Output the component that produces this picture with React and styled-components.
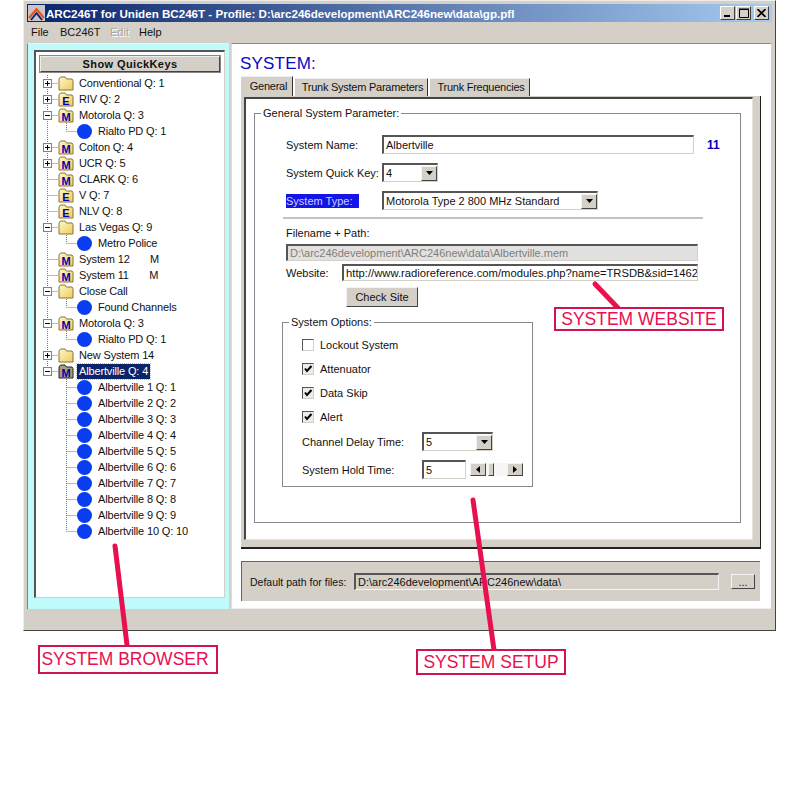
import React from 'react'
import styled, { createGlobalStyle } from 'styled-components'

const face = '#d4d0c8'
const red = '#e8104e'

const GlobalStyle = createGlobalStyle`
  html, body { margin: 0; padding: 0; background: #fff; }
  body { font-family: "Liberation Sans", Arial, sans-serif; font-size: 11px; color: #111; }
  * { box-sizing: border-box; }
`

const TREE = [
  { label: 'Conventional Q: 1', icon: '', box: 'plus' },
  { label: 'RIV Q: 2', icon: 'E', box: 'plus' },
  { label: 'Motorola Q: 3', icon: 'M', box: 'minus' },
  { label: 'Rialto PD Q: 1', child: true, last: true },
  { label: 'Colton Q: 4', icon: 'M', box: 'plus' },
  { label: 'UCR Q: 5', icon: 'M', box: 'plus' },
  { label: 'CLARK Q: 6', icon: 'M' },
  { label: 'V Q: 7', icon: 'E' },
  { label: 'NLV Q: 8', icon: 'E' },
  { label: 'Las Vegas Q: 9', icon: '', box: 'minus' },
  { label: 'Metro Police', child: true, last: true },
  { label: 'System 12       M', icon: 'M' },
  { label: 'System 11       M', icon: 'M' },
  { label: 'Close Call', icon: '', box: 'minus' },
  { label: 'Found Channels', child: true, last: true },
  { label: 'Motorola Q: 3', icon: 'M', box: 'minus' },
  { label: 'Rialto PD Q: 1', child: true, last: true },
  { label: 'New System 14', icon: '', box: 'plus' },
  { label: 'Albertville Q: 4', icon: 'M', box: 'minus', selected: true, end: true },
  ...Array.from({ length: 10 }, (_, i) => ({
    label: `Albertville ${i + 1} Q: ${i + 1}`,
    child: true,
    end: true,
    last: i === 9,
  })),
]

function Logo() {
  return (
    <svg width="17" height="16" viewBox="0 0 17 16">
      <rect width="17" height="16" fill="#c9c6c4" />
      <path d="M1 13 L8.5 4 L16 13" fill="none" stroke="#e8501c" strokeWidth="2" />
      <path d="M3 15 L8.5 8 L14 15" fill="none" stroke="#16246a" strokeWidth="2" />
    </svg>
  )
}

function FolderIcon({ letter, selected }) {
  return (
    <svg width="16" height="15" viewBox="0 0 16 15">
      <defs>
        <linearGradient id="folderFill" x1="0" y1="0" x2="1" y2="1">
          <stop offset="0" stopColor="#fff8c8" />
          <stop offset="1" stopColor="#eecb62" />
        </linearGradient>
      </defs>
      <path
        d="M1 3 L2.5 1 H7 L8.5 3 H14 L15 4.5 V14 H1 Z"
        fill={selected ? '#a8a270' : 'url(#folderFill)'}
        stroke={selected ? '#222' : '#8a7430'}
      />
      {letter && (
        <text
          x="8"
          y="12.5"
          textAnchor="middle"
          fontFamily="Liberation Sans"
          fontWeight="bold"
          fontSize="11"
          fill="#0000b0"
        >
          {letter}
        </text>
      )}
    </svg>
  )
}

// dotted connectors and the +/- box of a tree row
function TreeLines({ row }) {
  const dots = { stroke: '#777', strokeDasharray: '1 1', fill: 'none' }
  const width = row.child ? 39 : 20
  return (
    <svg width={width} height="16" viewBox={`0 0 ${width} 16`}>
      {!row.end && <path d="M9.5 0 V16" {...dots} />}
      {row.end && !row.child && <path d="M9.5 0 V8" {...dots} />}
      {!row.child && <path d="M9.5 8.5 H20" {...dots} />}
      {row.child && <path d={row.last ? 'M28.5 0 V8' : 'M28.5 0 V16'} {...dots} />}
      {row.child && <path d="M28.5 8.5 H39" {...dots} />}
      {row.box && (
        <g>
          <rect x="5.5" y="4.5" width="8" height="8" fill="#fff" stroke="#808080" />
          <path d="M7 8.5 H12" stroke="#000" />
          {row.box === 'plus' && <path d="M9.5 6 V11" stroke="#000" />}
        </g>
      )}
    </svg>
  )
}

function TreeItem({ row }) {
  return (
    <TreeRow>
      <TreeLines row={row} />
      {row.child ? <Dot /> : <FolderIcon letter={row.icon} selected={row.selected} />}
      <TreeLabel $selected={row.selected} $child={row.child}>
        {row.label}
      </TreeLabel>
    </TreeRow>
  )
}

function Combo({ value, width }) {
  return (
    <ComboBox $width={width}>
      <ComboValue>{value}</ComboValue>
      <ComboButton>
        <svg width="7" height="4" viewBox="0 0 7 4">
          <path d="M0 0 H7 L3.5 4 Z" fill="#000" />
        </svg>
      </ComboButton>
    </ComboBox>
  )
}

function Check({ label, checked }) {
  return (
    <CheckRow>
      <CheckBox $checked={checked}>
        {checked && (
          <svg width="10" height="10" viewBox="0 0 10 10">
            <path d="M2 4.5 L4 7 L8.5 2" fill="none" stroke="#000" strokeWidth="2" />
          </svg>
        )}
      </CheckBox>
      {label}
    </CheckRow>
  )
}

export default function App() {
  return (
    <Page>
      <GlobalStyle />
      <Window>
        <TitleBar>
          <Logo />
          <TitleText>ARC246T for Uniden BC246T - Profile: D:\arc246development\ARC246new\data\gp.pfl</TitleText>
          <Caption>
            <CaptionButton>
              <svg width="8" height="8" viewBox="0 0 8 8"><path d="M0 6 H6 V8 H0 Z" fill="#000" /></svg>
            </CaptionButton>
            <CaptionButton>
              <svg width="10" height="10" viewBox="0 0 10 10"><path d="M0.5 1.5 H9.5 V9.5 H0.5 Z M0 1 H10" fill="none" stroke="#000" /></svg>
            </CaptionButton>
            <CaptionButton $close>
              <svg width="9" height="8" viewBox="0 0 9 8"><path d="M0.5 0 L8.5 8 M8.5 0 L0.5 8" stroke="#000" strokeWidth="1.6" /></svg>
            </CaptionButton>
          </Caption>
        </TitleBar>
        <MenuBar>
          <MenuItem $width={29}>File</MenuItem>
          <MenuItem $width={50}>BC246T</MenuItem>
          <MenuItem $width={29} $disabled>Edit</MenuItem>
          <MenuItem $width={30}>Help</MenuItem>
        </MenuBar>
        <Main>
          <BrowserPane>
            <BrowserInner>
              <QuickKeys>Show QuickKeys</QuickKeys>
              <Tree>
                {TREE.map((row, i) => (
                  <TreeItem key={i} row={row} />
                ))}
              </Tree>
            </BrowserInner>
          </BrowserPane>
          <SetupPane>
            <Heading>SYSTEM:</Heading>
            <Tabs>
              <Tab $width={52} $active>General</Tab>
              <Tab $width={133}>Trunk System Parameters</Tab>
              <Tab $width={100}>Trunk Frequencies</Tab>
            </Tabs>
            <TabPage>
              <TabInner>
                <GroupBox>
                  <Legend $offset={-25}>General System Parameter:</Legend>
                  <FormRow>
                    <FieldLabel>System Name:</FieldLabel>
                    <TextInput $width={312} $height={19}>Albertville</TextInput>
                    <Count>11</Count>
                  </FormRow>
                  <FormRow>
                    <FieldLabel>System Quick Key:</FieldLabel>
                    <Combo value="4" width={56} />
                  </FormRow>
                  <FormRow>
                    <FieldLabel><Highlight>System Type:</Highlight></FieldLabel>
                    <Combo value="Motorola Type 2 800 MHz Standard" width={216} />
                  </FormRow>
                  <Separator />
                  <PlainLabel>Filename + Path:</PlainLabel>
                  <TextInput $width={412} $height={17} $disabled>D:\arc246development\ARC246new\data\Albertville.mem</TextInput>
                  <WebsiteRow>
                    <WebsiteLabel>Website:</WebsiteLabel>
                    <WebsiteInput $width={356} $height={17}>http://www.radioreference.com/modules.php?name=TRSDB&amp;sid=1462</WebsiteInput>
                  </WebsiteRow>
                  <CheckSite>Check Site</CheckSite>
                  <OptionsBox>
                    <Legend $offset={-13}>System Options:</Legend>
                    <Checks>
                      <Check label="Lockout System" />
                      <Check label="Attenuator" checked />
                      <Check label="Data Skip" checked />
                      <Check label="Alert" checked />
                    </Checks>
                    <OptionRow>
                      <OptionLabel>Channel Delay Time:</OptionLabel>
                      <Combo value="5" width={71} />
                    </OptionRow>
                    <OptionRow>
                      <OptionLabel>System Hold Time:</OptionLabel>
                      <TextInput $width={44} $height={19}>5</TextInput>
                      <ScrollBar>
                        <ScrollButton>
                          <svg width="4" height="7" viewBox="0 0 4 7"><path d="M4 0 V7 L0 3.5 Z" fill="#000" /></svg>
                        </ScrollButton>
                        <ScrollThumb />
                        <ScrollButton>
                          <svg width="4" height="7" viewBox="0 0 4 7"><path d="M0 0 V7 L4 3.5 Z" fill="#000" /></svg>
                        </ScrollButton>
                      </ScrollBar>
                    </OptionRow>
                  </OptionsBox>
                </GroupBox>
              </TabInner>
            </TabPage>
            <PathPanel>
              <PathLabel>Default path for files:</PathLabel>
              <PathField>D:\arc246development\ARC246new\data\</PathField>
              <BrowseButton>...</BrowseButton>
            </PathPanel>
          </SetupPane>
        </Main>
        <StatusBar />
      </Window>

      <Arrows width="800" height="800" viewBox="0 0 800 800">
        <path d="M595 284 L618 308" stroke={red} strokeWidth="5" strokeLinecap="round" />
        <path d="M115 546 L127 645" stroke={red} strokeWidth="5" strokeLinecap="round" />
        <path d="M473 500 L494 650" stroke={red} strokeWidth="5" strokeLinecap="round" />
      </Arrows>
      <Callout $x={554} $y={307} $w={170} $h={24}>SYSTEM WEBSITE</Callout>
      <Callout $x={38} $y={645} $w={180} $h={29} $inset={6}>SYSTEM BROWSER</Callout>
      <Callout $x={416} $y={649} $w={150} $h={26}>SYSTEM SETUP</Callout>
    </Page>
  )
}

const Page = styled.div`
  position: relative;
  width: 800px;
  height: 800px;
  background: #fff;
  overflow: hidden;
`

const Window = styled.div`
  margin-left: 23px;
  width: 753px;
  height: 631px;
  padding: 3px;
  display: flex;
  flex-direction: column;
  background: ${face};
  border: 1px solid #efedea;
  border-right-color: #444;
  border-bottom-color: #444;
`

const TitleBar = styled.div`
  height: 18px;
  flex: none;
  display: flex;
  align-items: center;
  padding: 0 3px 0 1px;
  background: linear-gradient(90deg, #0a246a, #a6caf0);
`

const TitleText = styled.div`
  margin-left: 1px;
  flex: 1;
  color: #fff;
  font-weight: bold;
  font-size: 11.6px;
  white-space: nowrap;
`

const Caption = styled.div`
  display: flex;
`

const CaptionButton = styled.div`
  width: 15px;
  height: 14px;
  margin-left: ${p => (p.$close ? '3px' : '1px')};
  display: flex;
  align-items: center;
  justify-content: center;
  background: ${face};
  border: 1px solid #fff;
  border-right-color: #404040;
  border-bottom-color: #404040;
`

const MenuBar = styled.div`
  height: 21px;
  flex: none;
  display: flex;
  align-items: center;
  padding-left: 4px;
  padding-bottom: 1px;
`

const MenuItem = styled.div`
  width: ${p => p.$width}px;
  color: ${p => (p.$disabled ? '#a8a6a0' : '#111')};
  text-shadow: ${p => (p.$disabled ? '1px 1px 0 #fff' : 'none')};
`

const Main = styled.div`
  height: 566px;
  flex: none;
  display: flex;
`

const BrowserPane = styled.div`
  width: 202px;
  flex: none;
  padding: 6px 4px 11px 6px;
  background: #c0fbfb;
  border-left: 1px solid #808080;
  border-top: 1px solid #f0f0f0;
`

const BrowserInner = styled.div`
  height: 100%;
  padding: 4px 0 0 4px;
  background: #fff;
  border: 1px solid #d4d0c8;
  border-top: 2px solid #555;
  border-left: 2px solid #555;
`

const QuickKeys = styled.div`
  width: 180px;
  height: 16px;
  display: flex;
  align-items: center;
  justify-content: center;
  background: ${face};
  font-weight: bold;
  letter-spacing: 0.4px;
  border: 1px solid #eee;
  border-right-color: #444;
  border-bottom-color: #444;
  box-shadow: 0 0 0 1px #888;
`

const Tree = styled.div`
  margin-top: 3px;
  margin-left: -2px;
`

const TreeRow = styled.div`
  height: 16px;
  display: flex;
  align-items: center;
  white-space: pre;
`

const Dot = styled.span`
  width: 15px;
  height: 15px;
  border-radius: 50%;
  background: #0a3cf0;
  flex: none;
`

const TreeLabel = styled.span`
  margin-left: ${p => (p.$child ? '4px' : '3px')};
  padding: 0 2px;
  height: 15px;
  line-height: 15px;
  letter-spacing: -0.15px;
  color: ${p => (p.$selected ? '#fff' : '#111')};
  background: ${p => (p.$selected ? '#0a246a' : 'transparent')};
  outline: ${p => (p.$selected ? '1px dotted #c8c080' : 'none')};
`

const SetupPane = styled.div`
  width: 540px;
  margin-left: 2px;
  flex: none;
  padding-left: 9px;
  background: #fff;
  border-left: 1px solid #ddd;
  border-top: 1px solid #888;
  border-bottom: 1px solid #eee;
`

const Heading = styled.div`
  height: 32px;
  margin-left: -1px;
  padding-top: 10px;
  font-size: 17px;
  line-height: 20px;
  letter-spacing: 0.2px;
  color: #0a0ac0;
`

const Tabs = styled.div`
  display: flex;
  align-items: flex-end;
  height: 20px;
`

const Tab = styled.div`
  width: ${p => p.$width}px;
  height: ${p => (p.$active ? '20px' : '18px')};
  margin-right: 2px;
  padding-bottom: 2px;
  padding-left: ${p => (p.$active ? '4px' : '3px')};
  display: flex;
  align-items: center;
  justify-content: center;
  white-space: nowrap;
  letter-spacing: -0.25px;
  background: ${face};
  border-right: 1px solid #333;
  border-top: 1px solid #eee;
`

const TabPage = styled.div`
  width: 520px;
  height: 453px;
  padding: 1px 7px 7px 3px;
  background: ${face};
  border-right: 1px solid #222;
  border-bottom: 2px solid #222;
`

const TabInner = styled.div`
  height: 100%;
  padding: 7px 11px 0 8px;
  background: #fff;
  border: 1px solid #e4e2de;
  border-top: 2px solid #444;
  border-left: 2px solid #444;
`

const GroupBox = styled.fieldset`
  margin: 0;
  height: 417px;
  padding: 15px 0 0 31px;
  border: 1px solid #888;
  min-width: 0;
`

const Legend = styled.legend`
  margin-left: ${p => p.$offset}px;
  padding: 0 2px;
  line-height: 14px;
`

const FormRow = styled.div`
  height: 19px;
  margin-bottom: 9px;
  display: flex;
  align-items: center;
`

const FieldLabel = styled.div`
  width: 96px;
  flex: none;
`

const Highlight = styled.span`
  display: inline-block;
  width: 73px;
  height: 14px;
  line-height: 14px;
  color: #c8d0ff;
  background: #1414e8;
`

const Count = styled.div`
  margin-left: 13px;
  color: #0000b8;
  font-weight: bold;
  font-size: 12px;
`

const TextInput = styled.div`
  width: ${p => p.$width}px;
  height: ${p => p.$height}px;
  flex: none;
  padding-left: 2px;
  display: flex;
  align-items: center;
  white-space: nowrap;
  overflow: hidden;
  color: ${p => (p.$disabled ? '#807e7a' : '#111')};
  background: ${p => (p.$disabled ? '#e3e1df' : '#fff')};
  border: 1px solid #d4d0c8;
  border-top: 2px solid #555;
  border-left: 2px solid #555;
`

const WebsiteInput = styled(TextInput)`
  font-size: 11.25px;
`

const ComboBox = styled.div`
  width: ${p => p.$width}px;
  height: 19px;
  flex: none;
  display: flex;
  align-items: center;
  background: #fff;
  border: 1px solid #d4d0c8;
  border-top: 2px solid #555;
  border-left: 2px solid #555;
`

const ComboValue = styled.div`
  flex: 1;
  padding-left: 2px;
  white-space: nowrap;
`

const ComboButton = styled.div`
  width: 16px;
  height: 15px;
  flex: none;
  display: flex;
  align-items: center;
  justify-content: center;
  background: ${face};
  border: 1px solid #f4f4f4;
  border-right-color: #444;
  border-bottom-color: #444;
`

const Separator = styled.div`
  width: 420px;
  height: 2px;
  margin-top: -2px;
  margin-left: -3px;
  background: #c4c2be;
`

const PlainLabel = styled.div`
  height: 14px;
  margin-top: 7px;
  margin-bottom: 4px;
  line-height: 14px;
`

const WebsiteRow = styled.div`
  margin-top: 3px;
  display: flex;
  align-items: center;
`

const WebsiteLabel = styled.div`
  width: 56px;
  flex: none;
`

const CheckSite = styled.div`
  width: 72px;
  height: 20px;
  margin: 6px 0 0 60px;
  display: flex;
  align-items: center;
  justify-content: center;
  background: ${face};
  border: 1px solid #f4f4f4;
  border-right-color: #444;
  border-bottom-color: #444;
`

const OptionsBox = styled.fieldset`
  width: 251px;
  height: 172px;
  margin: 8px 0 0 -4px;
  padding: 4px 0 0 19px;
  border: 1px solid #888;
  min-width: 0;
`

const Checks = styled.div`
  margin-bottom: 3px;
`

const CheckRow = styled.div`
  height: 24px;
  display: flex;
  align-items: center;
`

const CheckBox = styled.span`
  width: 12px;
  height: 12px;
  margin-right: 6px;
  display: flex;
  align-items: center;
  justify-content: center;
  background: ${p => (p.$checked ? '#ecebe8' : '#fff')};
  border: 1px solid #d4d0c8;
  border-top-color: #555;
  border-left-color: #555;
`

const OptionRow = styled.div`
  height: 19px;
  margin-bottom: 9px;
  display: flex;
  align-items: center;
`

const OptionLabel = styled.div`
  width: 120px;
  flex: none;
`

const ScrollBar = styled.div`
  width: 53px;
  height: 13px;
  margin-left: 4px;
  flex: none;
  display: flex;
  background: #f8f6f4;
`

const ScrollButton = styled.div`
  width: 16px;
  height: 13px;
  flex: none;
  display: flex;
  align-items: center;
  justify-content: center;
  background: ${face};
  border: 1px solid #f4f4f4;
  border-right-color: #444;
  border-bottom-color: #444;
`

const ScrollThumb = styled.div`
  width: 6px;
  height: 13px;
  margin: 0 auto 0 2px;
  background: ${face};
  border: 1px solid #f4f4f4;
  border-right-color: #444;
  border-bottom-color: #444;
`

const PathPanel = styled.div`
  width: 519px;
  height: 40px;
  margin-top: 12px;
  padding: 0 5px 0 8px;
  display: flex;
  align-items: center;
  background: ${face};
  border-top: 1px solid #666;
  border-left: 1px solid #666;
`

const PathLabel = styled.div`
  width: 104px;
  flex: none;
  font-size: 10.5px;
  white-space: nowrap;
`

const PathField = styled.div`
  width: 365px;
  height: 17px;
  flex: none;
  padding-left: 2px;
  display: flex;
  align-items: center;
  border: 1px solid #f4f4f4;
  border-top: 2px solid #555;
  border-left: 2px solid #555;
`

const BrowseButton = styled.div`
  width: 24px;
  height: 15px;
  margin-left: 12px;
  flex: none;
  display: flex;
  align-items: center;
  justify-content: center;
  background: ${face};
  border: 1px solid #f4f4f4;
  border-right-color: #444;
  border-bottom-color: #444;
`

const StatusBar = styled.div`
  flex: 1;
`

const Arrows = styled.svg`
  position: absolute;
  left: 0;
  top: 0;
  pointer-events: none;
`

const Callout = styled.div`
  position: absolute;
  left: ${p => p.$x}px;
  top: ${p => p.$y}px;
  width: ${p => p.$w}px;
  height: ${p => p.$h}px;
  padding-right: ${p => p.$inset || 0}px;
  display: flex;
  align-items: center;
  justify-content: center;
  color: ${red};
  font-size: 17.5px;
  background: #fff;
  border: 2px solid #d01450;
`
